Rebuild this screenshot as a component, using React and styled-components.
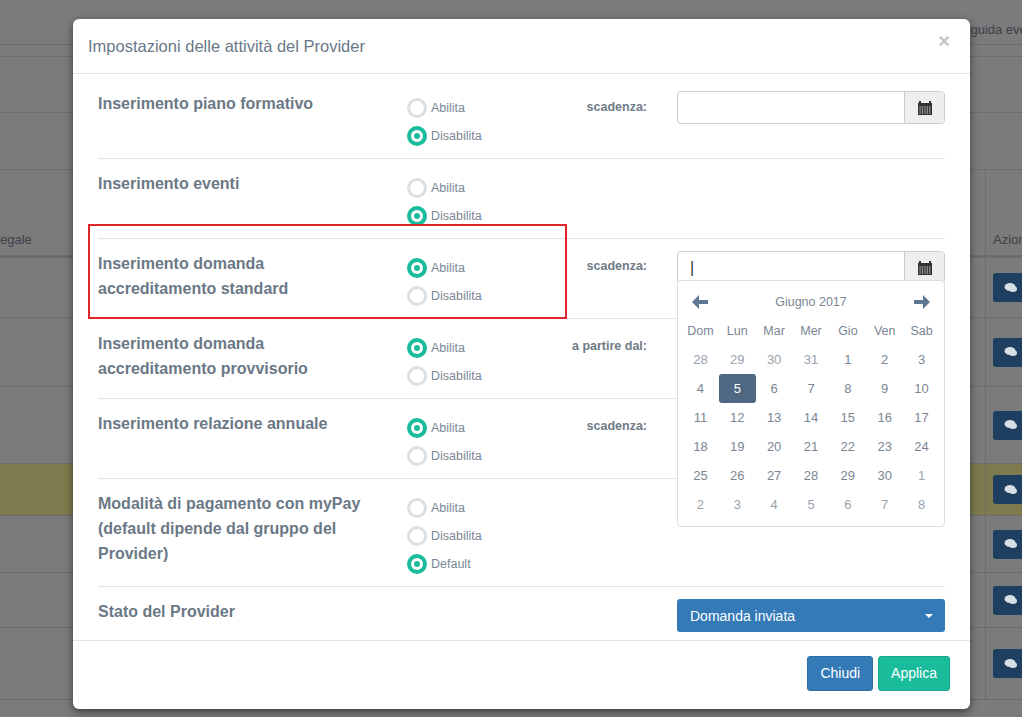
import React from "react";
import styled, { createGlobalStyle } from "styled-components";

const Global = createGlobalStyle`
  html, body { margin:0; padding:0; }
  body { width:1022px; height:717px; overflow:hidden; background:#7b7b7b; font-family:"Liberation Sans", Arial, sans-serif; }
`;

const Page = styled.div`position:relative; width:1022px; height:717px; overflow:hidden;`;
const BgRow = styled.div`
  height:${p => p.h}px; background:${p => p.yellow ? "#7d7b4d" : "#7b7b7b"};
  border-bottom:${p => p.thick ? 3 : 1}px solid #6c6c6c; box-sizing:border-box;
  display:flex; align-items:${p => p.alignEnd ? "flex-end" : "center"}; justify-content:space-between;
  font-size:13px; color:#3b4047; white-space:nowrap;
`;
const BgText = styled.span`padding:${p => p.pad};`;
const BgCell = styled.div`
  width:37px; height:100%; border-left:1px solid #6c6c6c; display:flex; align-items:${p => p.end ? "flex-end" : "center"}; padding-left:7px; box-sizing:border-box;
  overflow:hidden;
`;
const BgBtn = styled.div`
  width:30px; height:29px; background:#1e3f5f; border-radius:3px 0 0 3px; display:flex; align-items:center; justify-content:flex-end; padding-right:4px; box-sizing:border-box;
`;

const Modal = styled.div`
  position:absolute; left:73px; top:19px; width:897px; height:690px; background:#fff; border-radius:6px;
  box-shadow:0 3px 9px rgba(0,0,0,.5); display:flex; flex-direction:column;
`;
const Header = styled.div`
  height:55px; border-bottom:1px solid #e5e5e5; display:flex; align-items:center; justify-content:space-between; padding:0 20px 0 15px; box-sizing:border-box;
`;
const Title = styled.h4`margin:0; font-size:16.5px; font-weight:normal; color:#697887;`;
const Close = styled.span`font-size:20px; color:#c4c4c4; margin-top:-10px; font-weight:bold;`;
const Body = styled.div`flex:1; padding:7px 25px 0;`;
const Row = styled.div`
  display:grid; grid-template-columns:309px 145px 125px 268px;
  padding:${p => p.first ? "10px" : "12px"} 0 8px; border-bottom:${p => p.last ? "none" : "1px solid #e3e3e3"};
  box-sizing:border-box; position:relative;
`;
const Label = styled.div`font-size:16px; font-weight:bold; color:#6b7886; line-height:25px;`;
const Radios = styled.div`display:flex; flex-direction:column; padding-top:3px;`;
const RadioItem = styled.div`display:flex; align-items:center; height:28px; font-size:12.5px; color:#7a8693; gap:4px;`;
const Circle = styled.span`
  width:20px; height:20px; border-radius:50%; box-sizing:border-box; position:relative;
  border:${p => p.on ? "4px solid #1abc9c" : "3px solid #dcdfe2"};
  &::after { content:""; display:${p => p.on ? "block" : "none"}; position:absolute; left:3px; top:3px; width:6px; height:6px; border-radius:50%; background:#1abc9c; }
`;
const SideLabel = styled.div`font-size:12.5px; font-weight:bold; color:#6e7b88; text-align:right; padding-right:30px; line-height:25px; padding-top:${p => p.pt || 0}px;`;
const InputGroup = styled.div`display:flex; height:33px; border:1px solid #ccc; border-radius:4px; box-sizing:border-box;`;
const Input = styled.div`flex:1; display:flex; align-items:center; padding-left:12px; font-size:16px; color:#333; font-weight:200;`;
const Addon = styled.div`width:39px; background:#eee; border-left:1px solid #ccc; display:flex; align-items:center; justify-content:center; border-radius:0 3px 3px 0;`;
const Select = styled.div`
  height:33px; background:#337ab7; border-radius:3px; color:#fff; font-size:14px; display:flex; align-items:center; justify-content:space-between; padding:0 12px 0 13px;
  &::after { content:""; border-left:4px solid transparent; border-right:4px solid transparent; border-top:4px solid #fff; }
`;
const Footer = styled.div`
  height:69px; border-top:1px solid #e5e5e5; display:flex; justify-content:flex-end; align-items:center; gap:5px; padding:0 20px 4px 0; box-sizing:border-box;
`;
const Btn = styled.div`
  height:33px; padding:0 12px; display:flex; align-items:center; font-size:14px; color:#fff; border-radius:3px;
  background:${p => p.green ? "#1abc9c" : "#337ab7"}; border:1px solid ${p => p.green ? "#18a689" : "#2e6da4"};
`;
const RedBox = styled.div`position:absolute; left:88px; top:224px; width:479px; height:95px; border:2px solid #e0262b; box-sizing:border-box;`;

const Picker = styled.div`
  position:absolute; left:677px; top:280px; width:268px; height:247px; background:#fff; border:1px solid #ddd; border-radius:4px; box-sizing:border-box;
  padding:6px 4px; z-index:2;
`;
const PickHead = styled.div`display:grid; grid-template-columns:repeat(7,1fr); height:29px; align-items:center; text-align:center; font-size:12.5px; color:#7a8693;`;
const Month = styled.div`grid-column:2 / span 5;`;
const Cell = styled.div`
  height:29px; display:flex; align-items:center; justify-content:center; font-size:13px;
  color:${p => p.sel ? "#fff" : p.muted ? "#9aa3ac" : "#7a8693"};
  background:${p => p.sel ? "#4f6780" : "transparent"}; border-radius:3px;
`;
const Grid = styled.div`display:grid; grid-template-columns:repeat(7,1fr);`;

const Cal = () => (
  <svg width="14" height="14" viewBox="0 0 14 14">
    <rect x="1" y="0" width="2" height="2" fill="#333" /><rect x="11" y="0" width="2" height="2" fill="#333" />
    <rect x="0" y="2" width="14" height="12" fill="#333" />
    {[0,1,2,3].map(r => [0,1,2,3,4].map(c => <rect key={r+"-"+c} x={1.5+c*2.4} y={5.5+r*2} width="1.2" height="1" fill="#eee" />))}
  </svg>
);
const Arrow = ({ left }) => (
  <svg width="18" height="16" viewBox="0 0 18 16" style={{ transform: left ? "scaleX(-1)" : "none", margin: "0 auto" }}>
    <path d="M1 6h9V1l7 7-7 7v-5H1z" fill="#5d7892" />
  </svg>
);
const Chat = () => (
  <svg width="14" height="12" viewBox="0 0 14 12"><ellipse cx="6" cy="5" rx="5.5" ry="4" fill="#d7dee6" /><ellipse cx="9" cy="7" rx="4" ry="3" fill="#d7dee6" /></svg>
);

const Radio = ({ on, children }) => <RadioItem><Circle on={on} />{children}</RadioItem>;

const weeks = [
  [[28,1],[29,1],[30,1],[31,1],[1],[2],[3]],
  [[4],[5,0,1],[6],[7],[8],[9],[10]],
  [[11],[12],[13],[14],[15],[16],[17]],
  [[18],[19],[20],[21],[22],[23],[24]],
  [[25],[26],[27],[28],[29],[30],[1,1]],
  [[2,1],[3,1],[4,1],[5,1],[6,1],[7,1],[8,1]],
];

const bg = [
  { h: 45, top: true }, { h: 12 }, { h: 56 }, { h: 57 },
  { h: 88, thick: true, head: true }, { h: 60, b: 1 }, { h: 69, b: 1 }, { h: 77, b: 1 },
  { h: 52, y: 1, b: 1 }, { h: 57, b: 1 }, { h: 55, b: 1 }, { h: 72, b: 1 }, { h: 20 },
];

export default function App() {
  return (
    <Page>
      <Global />
      {bg.map((r, i) => (
        <BgRow key={i} h={r.h} thick={r.thick} yellow={r.y} alignEnd={r.head}>
          {r.top && <BgText pad="14px 0 0 935px">Linee guida eventi</BgText>}
          {r.head && <><BgText pad="0 0 8px 0">egale</BgText><BgCell end><BgText pad="0 0 8px 0">Azioni</BgText></BgCell></>}
          {r.b && <><span /><BgCell><BgBtn><Chat /></BgBtn></BgCell></>}
        </BgRow>
      ))}
      <Modal>
        <Header><Title>Impostazioni delle attività del Provider</Title><Close>×</Close></Header>
        <Body>
          <Row first>
            <Label>Inserimento piano formativo</Label>
            <Radios><Radio>Abilita</Radio><Radio on>Disabilita</Radio></Radios>
            <SideLabel pt={4}>scadenza:</SideLabel>
            <InputGroup><Input /><Addon><Cal /></Addon></InputGroup>
          </Row>
          <Row>
            <Label>Inserimento eventi</Label>
            <Radios><Radio>Abilita</Radio><Radio on>Disabilita</Radio></Radios>
          </Row>
          <Row>
            <Label>Inserimento domanda<br />accreditamento standard</Label>
            <Radios><Radio on>Abilita</Radio><Radio>Disabilita</Radio></Radios>
            <SideLabel pt={3}>scadenza:</SideLabel>
            <InputGroup><Input>|</Input><Addon><Cal /></Addon></InputGroup>
          </Row>
          <Row>
            <Label>Inserimento domanda<br />accreditamento provvisorio</Label>
            <Radios><Radio on>Abilita</Radio><Radio>Disabilita</Radio></Radios>
            <SideLabel pt={3}>a partire dal:</SideLabel>
            <InputGroup><Input /><Addon><Cal /></Addon></InputGroup>
          </Row>
          <Row>
            <Label>Inserimento relazione annuale</Label>
            <Radios><Radio on>Abilita</Radio><Radio>Disabilita</Radio></Radios>
            <SideLabel pt={3}>scadenza:</SideLabel>
            <InputGroup><Input /><Addon><Cal /></Addon></InputGroup>
          </Row>
          <Row>
            <Label>Modalità di pagamento con myPay<br />(default dipende dal gruppo del<br />Provider)</Label>
            <Radios><Radio>Abilita</Radio><Radio>Disabilita</Radio><Radio on>Default</Radio></Radios>
          </Row>
          <Row last>
            <Label>Stato del Provider</Label>
            <div /><div />
            <Select>Domanda inviata</Select>
          </Row>
        </Body>
        <Footer><Btn>Chiudi</Btn><Btn green>Applica</Btn></Footer>
      </Modal>
      <RedBox />
      <Picker>
        <PickHead><Arrow left /><Month>Giugno 2017</Month><Arrow /></PickHead>
        <PickHead>{["Dom","Lun","Mar","Mer","Gio","Ven","Sab"].map(d => <div key={d}>{d}</div>)}</PickHead>
        <Grid>
          {weeks.flat().map(([n, m, s], i) => <Cell key={i} muted={m} sel={s}>{n}</Cell>)}
        </Grid>
      </Picker>
    </Page>
  );
}
